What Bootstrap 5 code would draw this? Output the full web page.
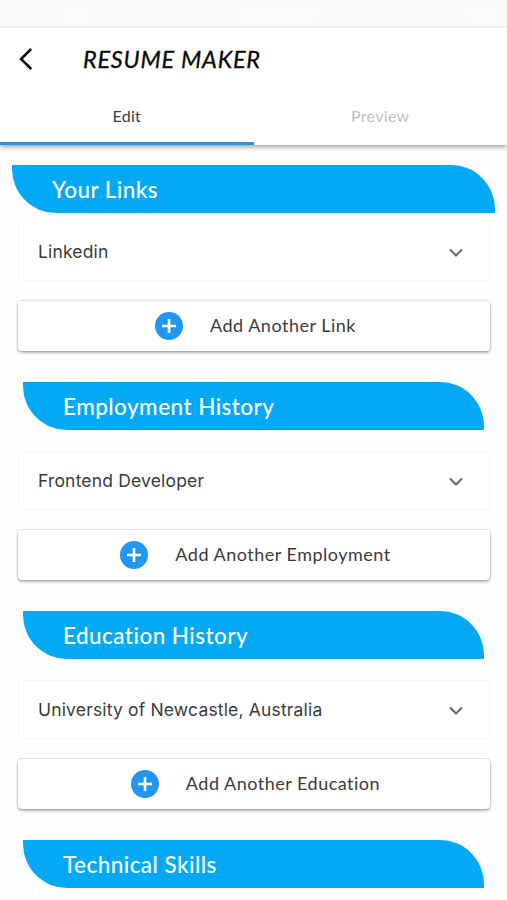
<!DOCTYPE html>
<html lang="en">
<head>
<meta charset="utf-8">
<meta name="viewport" content="width=device-width, initial-scale=1">
<title>Resume Maker</title>
<link href="https://cdn.jsdelivr.net/npm/bootstrap@5.3.0/dist/css/bootstrap.min.css" rel="stylesheet">
<style>
body{font-family:Lato,"Open Sans",sans-serif;background:#fefefe;color:#3b3b3b;height:900px;overflow:hidden}
.status-strip{height:28px;background:#fafafa;padding:0 12px 2px 68px}
.status-strip i{background:#fcfcfc;border-radius:5px;height:9px}
.app-head{height:117px;background:#fff;box-shadow:0 2px 5px rgba(0,0,0,.38)}
.title-row{height:62px;padding-left:18px}
.back-btn{width:16px;height:24px}
.app-title{font-size:23.5px;font-style:italic;font-weight:400;-webkit-text-stroke:.3px #080808;color:#080808;margin-left:49px;line-height:30px;letter-spacing:.75px}
.tab-row{height:55px}
.tab-row .nav-link{height:55px;font-size:16px;line-height:24px;padding:14px 0 0;color:#bfbfbf;border-radius:0;border-bottom:3px solid transparent;letter-spacing:.3px}
.tab-row .nav-link.active{color:#3b3b3b;border-color:#2196e3}
.banner{height:48px;background:#03a9f4;color:#fff;border-radius:0 44px 0 44px;margin:0 23px;padding-left:40px;font-size:22.5px;font-weight:500;line-height:49px;letter-spacing:.45px}
.banner-wide{margin:20px 12px -12px}
.entry{height:59px;margin:21px 17px 0 18px;padding:2px 26px 0 19px;border:1px solid #f7f7f7;background:#fff;font-family:Inter,sans-serif;font-size:17.5px;letter-spacing:.17px}
.add-btn{height:50px;margin:20px 17px 31px 18px;background:#fff;border-radius:4px;color:#3b3b3b;font-size:18px;letter-spacing:.5px;box-shadow:0 0 1px 1px rgba(0,0,0,.12),0 2px 3px rgba(0,0,0,.28);border:0;gap:27px;padding:0 0 0 3px}
.add-btn span{padding-bottom:2px}
.plus{width:28px;height:28px}
</style>
</head>
<body>
<div class="status-strip d-flex align-items-center justify-content-between">
  <i style="width:20px"></i><i style="width:70px"></i><i style="width:25px"></i>
</div>
<header class="app-head position-relative">
  <div class="title-row d-flex align-items-center">
    <svg class="back-btn" viewBox="0 0 16 24" fill="none" stroke="#080808" stroke-width="2.5"><path d="M13.200 2 3 12l10.200 10"/></svg>
    <h1 class="app-title mb-0">RESUME MAKER</h1>
  </div>
  <nav class="tab-row nav nav-fill">
    <a class="nav-link active w-50" href="#">Edit</a><a class="nav-link w-50" href="#">Preview</a>
  </nav>
</header>
<main class="d-flex flex-column">
  <h2 class="banner banner-wide">Your Links</h2>
  <div class="entry d-flex align-items-center justify-content-between"><span>Linkedin</span>
    <svg width="14" height="10" viewBox="0 0 14 10" fill="none" stroke="#666" stroke-width="2"><path d="m1 1.500 6 6 6-6"/></svg></div>
  <button class="add-btn btn d-flex align-items-center justify-content-center">
    <svg class="plus" viewBox="0 0 28 28"><circle cx="14" cy="14" r="14" fill="#2196f3"/><path d="M14 7v14M7 14h14" stroke="#fff" stroke-width="2.600"/></svg><span>Add Another Link</span></button>

  <h2 class="banner">Employment History</h2>
  <div class="entry d-flex align-items-center justify-content-between"><span>Frontend Developer</span>
    <svg width="14" height="10" viewBox="0 0 14 10" fill="none" stroke="#666" stroke-width="2"><path d="m1 1.500 6 6 6-6"/></svg></div>
  <button class="add-btn btn d-flex align-items-center justify-content-center">
    <svg class="plus" viewBox="0 0 28 28"><circle cx="14" cy="14" r="14" fill="#2196f3"/><path d="M14 7v14M7 14h14" stroke="#fff" stroke-width="2.600"/></svg><span>Add Another Employment</span></button>

  <h2 class="banner">Education History</h2>
  <div class="entry d-flex align-items-center justify-content-between"><span>University of Newcastle, Australia</span>
    <svg width="14" height="10" viewBox="0 0 14 10" fill="none" stroke="#666" stroke-width="2"><path d="m1 1.500 6 6 6-6"/></svg></div>
  <button class="add-btn btn d-flex align-items-center justify-content-center">
    <svg class="plus" viewBox="0 0 28 28"><circle cx="14" cy="14" r="14" fill="#2196f3"/><path d="M14 7v14M7 14h14" stroke="#fff" stroke-width="2.600"/></svg><span>Add Another Education</span></button>

  <h2 class="banner">Technical Skills</h2>
</main>
</body>
</html>
